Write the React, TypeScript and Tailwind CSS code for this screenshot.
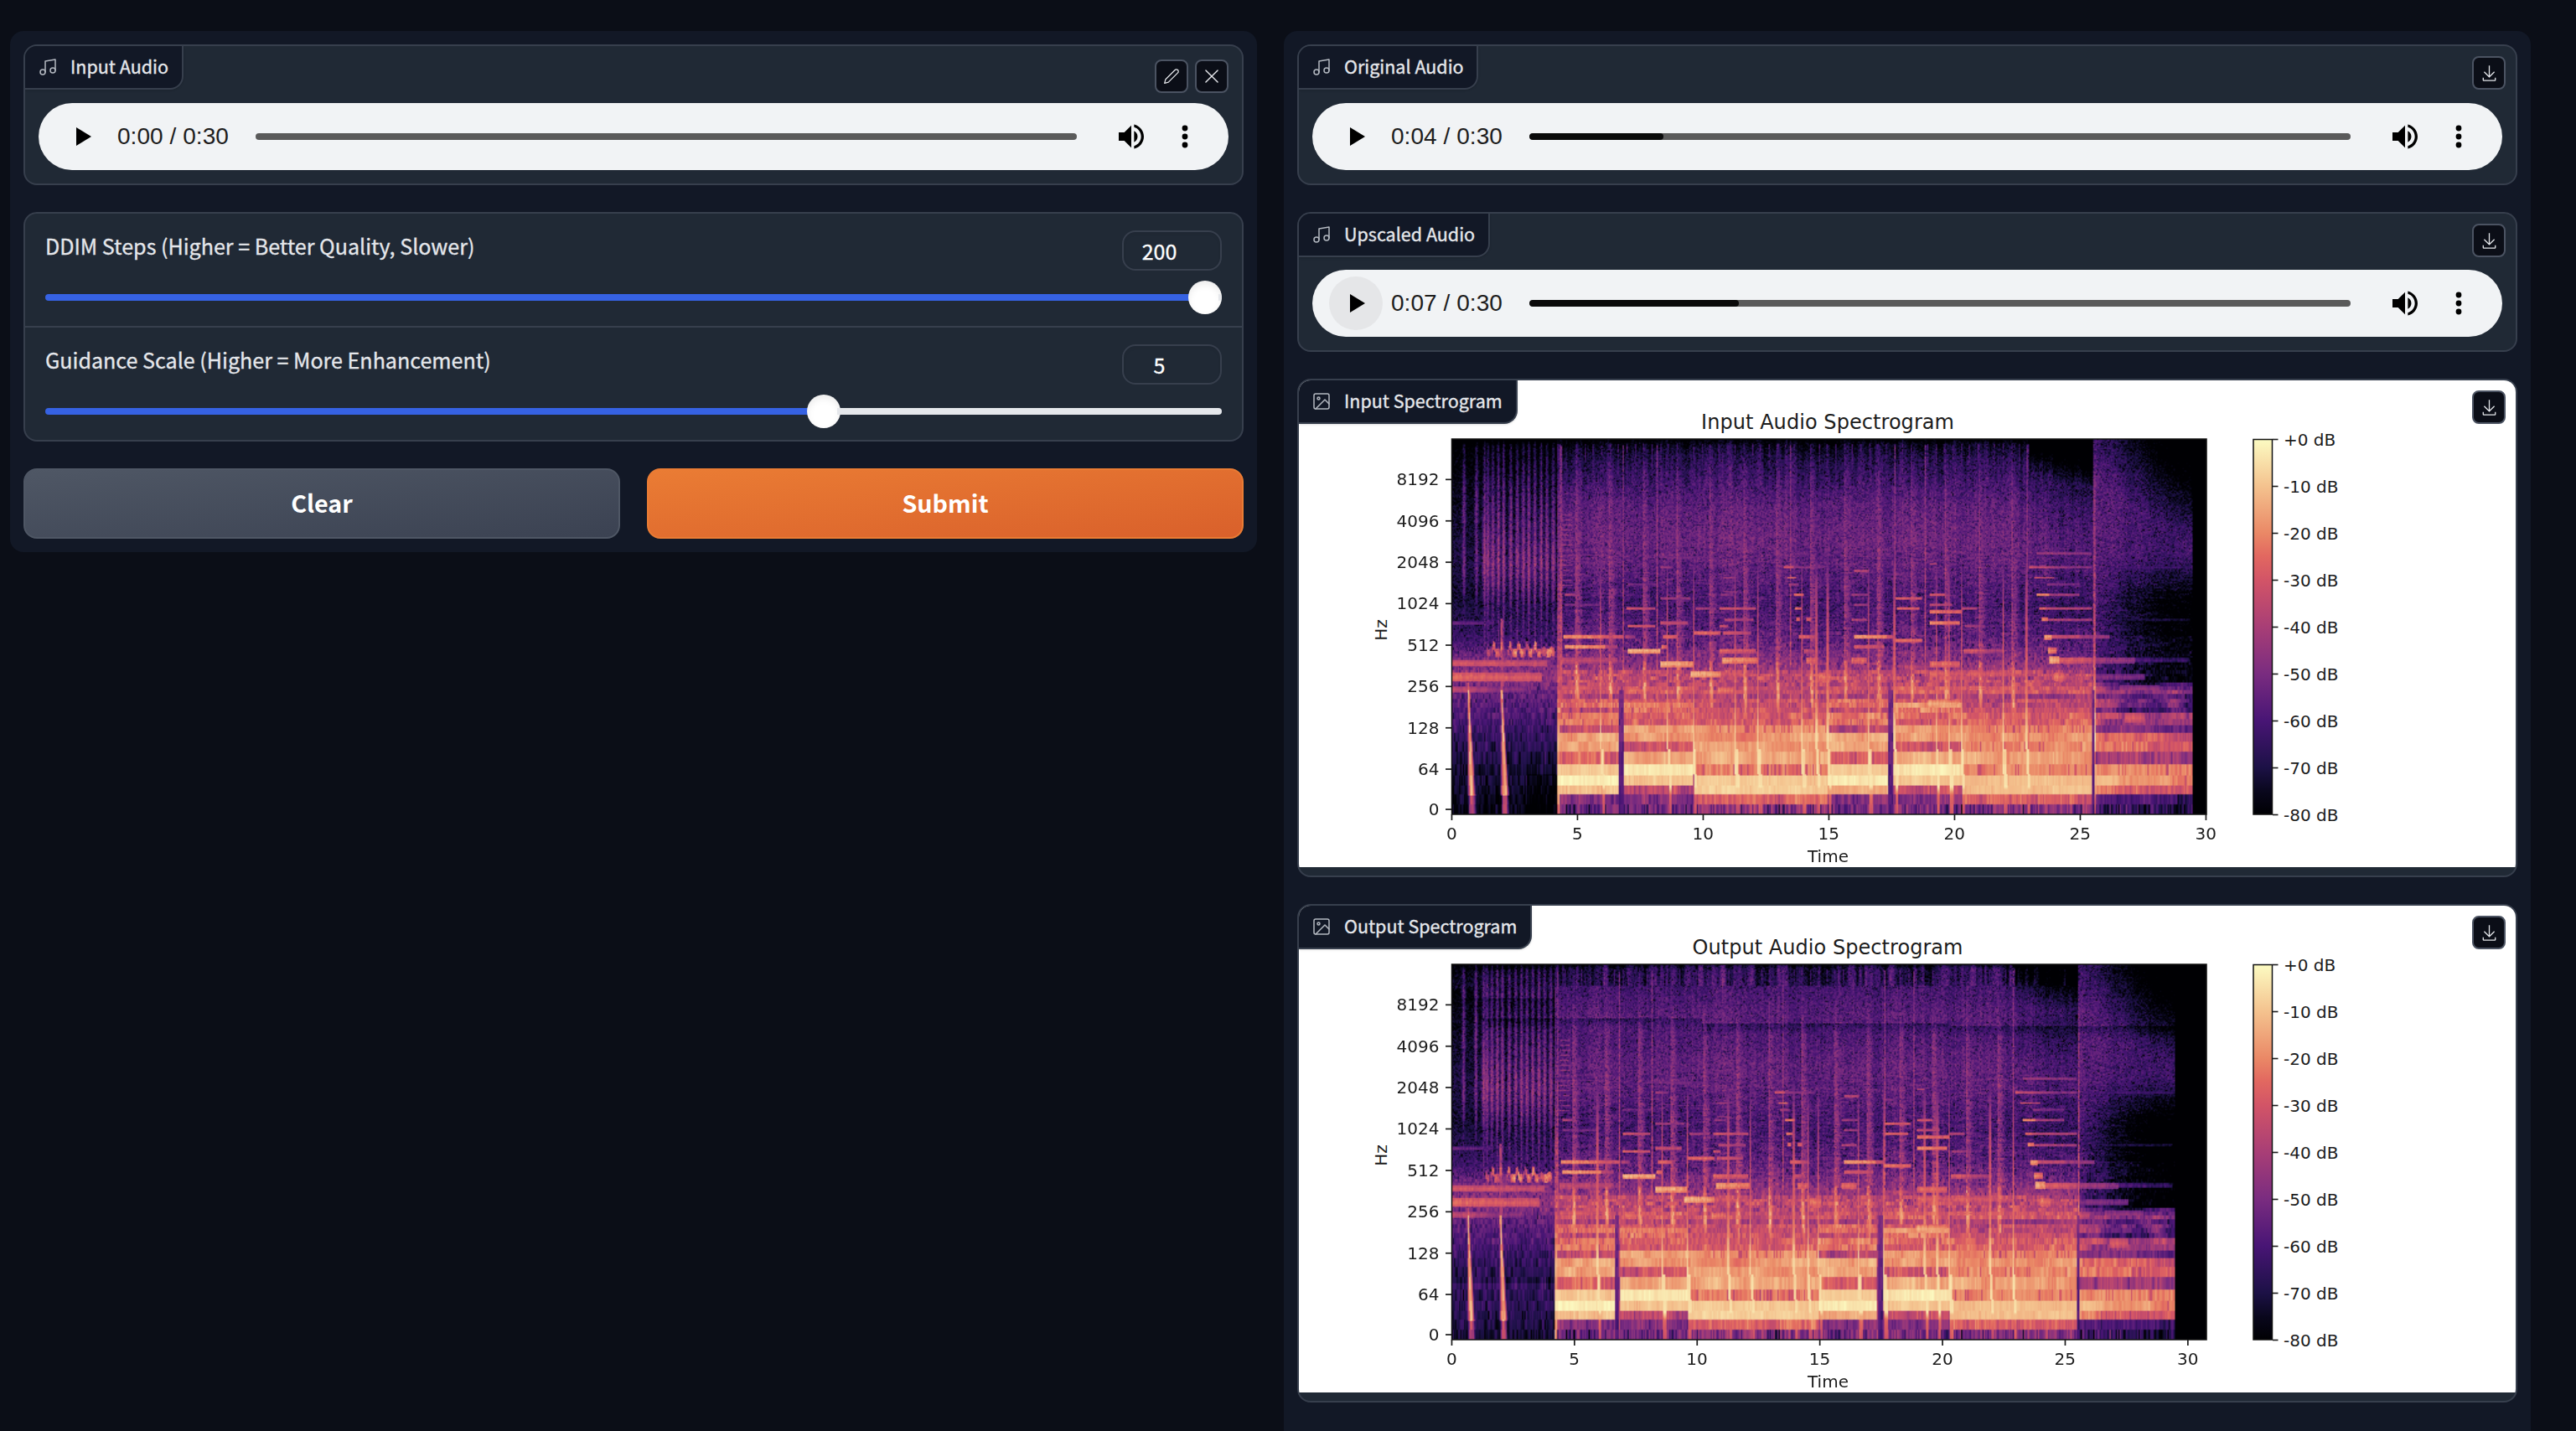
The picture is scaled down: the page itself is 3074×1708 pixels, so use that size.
import { useLayoutEffect, useRef, type ReactNode } from "react";

/* ---------- spectrogram model ---------- */

type Stop = [number, number, number, number];

// Magma ramp: level 0..1, r, g, b
const MAGMA: Stop[] = [
  [0, 0, 0, 3],
  [0.06, 9, 7, 28],
  [0.125, 28, 17, 70],
  [0.25, 72, 21, 117],
  [0.375, 122, 44, 128],
  [0.5, 168, 62, 118],
  [0.625, 210, 84, 103],
  [0.69, 226, 104, 96],
  [0.75, 234, 136, 102],
  [0.875, 244, 194, 142],
  [1, 252, 251, 194],
];

function magma(v: number): [number, number, number] {
  const x = Math.min(1, Math.max(0, v));
  for (let i = 1; i < MAGMA.length; i++) {
    if (x <= MAGMA[i][0]) {
      const a = MAGMA[i - 1];
      const b = MAGMA[i];
      const k = (x - a[0]) / (b[0] - a[0]);
      return [a[1] + (b[1] - a[1]) * k, a[2] + (b[2] - a[2]) * k, a[3] + (b[3] - a[3]) * k];
    }
  }
  return [252, 251, 194];
}

function hash(a: number, b: number): number {
  let h = (Math.imul(a | 0, 374761393) + Math.imul(b | 0, 668265263)) | 0;
  h = Math.imul(h ^ (h >>> 13), 1274126177);
  h = Math.imul(h ^ (h >>> 16), 2246822519);
  return ((h ^ (h >>> 15)) >>> 0) / 4294967296;
}

function smoothNoise(x: number, seed: number): number {
  const i = Math.floor(x);
  const f = x - i;
  const s = f * f * (3 - 2 * f);
  return hash(i, seed) * (1 - s) + hash(i + 1, seed) * s - 0.5;
}

function curve(points: number[][], x: number): number {
  if (x <= points[0][0]) return points[0][1];
  for (let i = 1; i < points.length; i++) {
    if (x <= points[i][0]) {
      const [x0, y0] = points[i - 1];
      const [x1, y1] = points[i];
      return y0 + ((y1 - y0) * (x - x0)) / (x1 - x0);
    }
  }
  return points[points.length - 1][1];
}

const PROFILE = [[0, -84], [5, -78], [22, -69], [50, -62], [80, -56], [120, -53], [150, -55], [178, -59], [200, -61], [225, -57], [245, -54], [262, -48], [280, -42], [300, -38], [448, -38]];
const PROFILE_OUT = [[0, -74], [5, -65], [30, -61], [60, -57], [90, -59], [120, -55], [150, -56], [178, -60], [200, -61], [225, -57], [245, -54], [262, -48], [280, -42], [300, -38], [448, -38]];
const INTRO = [[0, -88], [15, -82], [60, -78], [110, -73], [150, -71], [185, -74], [215, -69], [240, -63], [262, -52], [285, -45], [300, -54], [330, -60], [360, -66], [400, -72], [448, -78]];

// Chord sections: start, end, level of each low FFT bin
const SECTIONS: { a: number; b: number; bins: number[] }[] = [
  { a: 4.22, b: 6.65, bins: [-52, -47, -13, -3, -9, -28, -14, -15, -35, -21, -21, -38, -27, -29, -40, -31, -33, -42] },
  { a: 6.85, b: 9.62, bins: [-52, -48, -35, -9, -3, -14, -31, -18, -17, -29, -29, -23, -21, -30, -38, -28, -30, -42] },
  { a: 9.65, b: 14.96, bins: [-48, -27, -8, -9, -22, -15, -18, -18, -20, -30, -30, -31, -34, -33, -40, -33, -35, -42] },
  { a: 14.98, b: 17.36, bins: [-52, -47, -14, -3, -8, -26, -15, -15, -38, -22, -22, -36, -24, -26, -40, -31, -32, -42] },
  { a: 17.58, b: 20.3, bins: [-52, -48, -33, -9, -4, -14, -31, -18, -17, -30, -27, -24, -18, -26, -38, -30, -28, -40] },
  { a: 20.32, b: 25.5, bins: [-48, -28, -11, -11, -20, -16, -20, -18, -19, -28, -28, -34, -36, -35, -42, -30, -31, -40] },
  { a: 25.58, b: 29.47, bins: [-62, -54, -24, -11, -18, -38, -23, -24, -46, -36, -34, -54, -47, -46, -56, -44, -47, -56] },
];

// Harmonic partials: row, start, end, level, half height
const PARTIALS: number[][] = [
  [268, 0, 3.8, -28, 3.6], [284.5, 0, 3.6, -24, 5.2], [299, 0, 1.4, -33, 4], [299, 1.4, 3, -42, 4], [220, 0, 1.7, -50, 2],
  [236, 4.45, 5.95, -18, 2.6], [236, 5.95, 6.8, -27, 2.6], [236, 6.9, 7.3, -38, 2.6], [248, 4.5, 6.1, -15, 2.4], [248, 6.1, 6.6, -33, 2.4],
  [264, 4.4, 6.6, -32, 4], [186, 4.5, 5.1, -35, 1.2], [198, 4.5, 5.9, -45, 1.2], [65, 4.5, 5, -50, 1], [120, 4.5, 5.6, -48, 1],
  [202.5, 6.95, 8.1, -28, 1.5], [223.5, 7, 8.1, -25, 1.7], [252.5, 7, 8.3, -11, 3], [268.5, 8.3, 9.6, -12, 3.6], [236, 8.4, 9, -24, 2.6],
  [248, 8.35, 8.6, -22, 2.4], [219.5, 8.3, 9.4, -30, 1.7], [190, 8.3, 9.5, -38, 1.2], [231.5, 9.65, 10.7, -24, 2], [231.5, 10.8, 11.9, -30, 2],
  [280.5, 9.5, 10.7, -12, 4], [280.5, 10.7, 12, -28, 4], [202.5, 9.7, 10.5, -36, 1.4], [202.5, 10.65, 12.1, -27, 1.4], [186, 10.7, 11.2, -40, 1.2],
  [182, 10.8, 11.4, -42, 1.2], [223.5, 10.65, 11, -28, 1.7], [215.5, 10.85, 12, -34, 1.5], [252.5, 10.65, 12.1, -25, 3], [264, 10.75, 12.15, -16, 3.8],
  [165.5, 10.8, 11.3, -38, 1], [153, 13.2, 13.6, -26, 1], [153, 13.6, 14.8, -42, 1], [165.5, 13.35, 13.7, -24, 1.2], [173.5, 13.4, 13.8, -36, 1],
  [186, 13.6, 14, -20, 1.5], [202.5, 13.65, 13.9, -20, 1.7], [215.5, 13.7, 13.85, -22, 2.4], [215.5, 14.1, 14.3, -25, 2], [236, 13.8, 14.2, -24, 2.6],
  [236, 14.2, 14.5, -32, 2.6], [252.5, 14, 14.4, -30, 3], [264, 14.1, 14.5, -22, 4], [284, 14.6, 15.1, -21, 5], [141, 8.3, 10.5, -46, 1],
  [153, 8.3, 8.8, -38, 1], [173.5, 7, 8.2, -45, 1], [300, 7.1, 8.4, -24, 4], [316, 6.9, 9.6, -22, 4], [297, 4.4, 6.5, -27, 4],
  [300, 10.6, 11.2, -21, 4], [157.5, 16, 16.6, -31, 1], [186, 15.9, 16.6, -38, 1.2], [198, 16, 16.6, -38, 1.2], [215.5, 15.9, 16.5, -33, 1.8],
  [236, 16, 17.3, -16, 2.8], [236, 17.3, 17.6, -28, 2.6], [248, 16, 17.2, -28, 2.4], [264, 15.9, 16.5, -23, 4], [190, 17.65, 18.7, -25, 1.5],
  [202.5, 17.7, 18.6, -23, 1.7], [240, 17.65, 18.7, -21, 2.4], [161.5, 17.6, 18.1, -42, 1], [149, 19, 19.3, -31, 1], [186, 19, 19.6, -27, 1.5],
  [198, 19, 19.9, -32, 1.4], [206.5, 19, 20.3, -22, 2], [219.5, 19, 20.2, -19, 2.2], [268.5, 19, 20.2, -23, 3.8], [272, 18, 19, -34, 3],
  [316, 18.9, 20.2, -12, 4], [324, 17.8, 20.2, -22, 3], [202.5, 20.3, 20.9, -33, 1.4], [223.5, 20.4, 21.2, -38, 1.6], [252.5, 20.35, 21.2, -28, 3],
  [252.5, 21.2, 21.9, -37, 3], [280.5, 19, 20.5, -26, 4], [280.5, 20.5, 22.9, -27, 4], [136.5, 23.3, 25.5, -39, 1], [153, 23, 24, -31, 1],
  [153, 24, 25.5, -41, 1], [153, 25.6, 29.4, -55, 1], [165.5, 23.2, 24, -29, 1.2], [173.5, 23.7, 25, -44, 1], [186, 23.3, 23.8, -16, 1.5],
  [186, 23.8, 25, -36, 1.2], [202.5, 23.4, 23.7, -22, 1.8], [202.5, 23.7, 25.5, -32, 1.3], [215.5, 23.5, 23.75, -18, 2.5], [215.5, 23.75, 25.5, -35, 1.6],
  [215.5, 26, 29.4, -64, 1], [236, 23.6, 23.9, -15, 3], [236, 23.9, 25, -30, 2.5], [236, 25, 26.2, -40, 2.4], [252.5, 23.75, 24.1, -20, 3.5],
  [264, 23.8, 24.2, -12, 4.4], [264, 24.2, 25.5, -26, 3.8], [264, 25.5, 27.2, -40, 3.6], [264, 27.2, 29.4, -58, 3], [284, 24, 24.4, -20, 5],
  [284, 24.4, 25.5, -32, 5], [284, 25.6, 27.6, -46, 4], [297, 20.4, 25.5, -29, 4], [300, 25.6, 26, -30, 4], [299, 26.6, 28.2, -42, 5], [333, 26.8, 27.6, -26, 6],
];

const KICKS = [5.95, 8.6, 9.62, 11.28, 12.2, 13.95, 14.52, 14.97, 16.6, 17.62, 19.28, 19.8, 20.28, 21.95, 22.88];
const SNARES = [4.97, 6.3, 7.65, 8.98, 10.3, 11.65, 12.95, 14.3, 15.65, 16.98, 18.3, 19.65, 21, 22.3];
const HATS = [8.2, 13.5, 17.65, 18.85, 22.9, 4.35, 6.85];
const GAPS = [[6.66, 6.84], [17.38, 17.57], [25.49, 25.57]];
const CLICKS = [0.5, 1.0, 1.32, 1.45, 1.65, 1.87, 2.08, 2.36, 2.62, 2.86, 3.08, 3.32, 3.57, 3.8, 4.05];

const BIN_HZ = 15.625;

function level(t: number, y: number, col: number, row: number, output: boolean): number {
  if (t > 29.47) return -82;
  const hz = y > 394.3 ? (64 * (442.3 - y)) / 48 : 64 * Math.pow(2, (394.3 - y) / 49.33);
  const bin = Math.max(0, Math.round(hz / BIN_HZ));
  const u = Math.max(0.0005, hash(col, bin < 160 ? bin * 7 + 3 : row * 977 + 11));
  const speckle = Math.max(-17, 4.2 * Math.log(-Math.log(1 - u * 0.999)) + 2.2);
  const streak = smoothNoise(t * 14, bin + 31) * 8 + smoothNoise(t * 45, bin + 811) * 6;

  let db: number;
  let noise: number;

  if (t < 4.22) {
    db = curve(INTRO, y);
    if (output) db += y < 30 ? 6 : y > 380 ? 6 : 0;
    noise = speckle * 0.9;
    if (y > 255) noise = speckle * 0.6 + streak * 1.1;
    if (t > 3 && y > 400 && !output) db -= 5;
    for (const c of CLICKS) {
      const d = Math.abs(t - c);
      if (d < 0.12 && y < 300) {
        const strong = curve([[0, -84], [8, -66], [60, -53], [110, -45], [150, -39], [172, -44], [200, -53], [240, -54], [262, -44], [300, -44]], y) + (output && y < 40 ? 8 : 0);
        const weak = c < 1.2 && y > 100 ? 7 : 0;
        db = Math.max(db, strong - weak - d * 230);
      }
    }
    if (t > 1.4 && t < 4.12 && y > 240 && y < 266) {
      const centre = 255 - 9 * Math.max(0, Math.sin(t * 19 + 1)) * (t < 3.5 ? 1 : 0.2);
      const d = Math.abs(y - centre);
      if (d < 5.5) db = Math.max(db, -28 + smoothNoise(t * 12, 5) * 28 - d * 1.4 - (t < 2.4 ? 7 : 0));
    }
    for (const [c, top] of [[0.68, 290], [2.0, 215]]) {
      if (y > top) {
        const centre = c + Math.max(0, (y - 300) / 148) * 0.15;
        const w = 0.03 + Math.max(0, (y - 330) / 118) * 0.06;
        const d = Math.abs(t - centre) / w;
        if (d < 2.2) db = Math.max(db, (y > 425 ? -32 : y > 300 ? -11 : -30) - d * d * 12);
      }
    }
  } else {
    db = curve(output ? PROFILE_OUT : PROFILE, y) + smoothNoise(t * 2.2, 99) * 5 + smoothNoise(t * 18, 17) * 5;
    noise = y > 255 ? speckle * 0.7 + streak * 1.2 : speckle * 0.92 + (y > 130 ? smoothNoise(t * 3, bin) * 8 : 0);
    if (y < 55 && !output) db += smoothNoise(t * 9, 4) * 9;
    if (output && y < 26) db += smoothNoise(t * 9, 4) * 22 - 3;

    if (t > 23 && t < 25.55) {
      const k = (t - 23) / 2.5;
      if (y < 150) db -= (3 + 7 * k) * (1 - y / 150) + Math.min(1, Math.max(0, (42 + 26 * k - y) / 36)) * 12;
      if (y > 60 && y < 260) db -= 5 * k;
    }
    if (t >= 25.55) {
      const k = (t - 25.55) / 3.9;
      if (y < 290) {
        const edge = 3 + 70 * k;
        db = -55 - 7 * k - 3 * Math.sin(Math.PI * k) + smoothNoise(t * 3, 98) * 3;
        db -= Math.min(1.6, Math.max(0, (edge + 50 - y) / 55)) * (8 + 9 * k);
        if (y > 140) db -= Math.min(1, (y - 140) / 55) * (1 + 22 * Math.pow(k, 0.6)) * (y > 235 ? 0.75 : 1);
        if (output && y > 130) db -= 7 * k * Math.min(1, (y - 130) / 40);
        noise = speckle + (y > 170 ? smoothNoise(t * 4, bin) * 8 : 0);
      } else {
        db = -48 - 16 * k;
      }
    }

    for (const s of SECTIONS) {
      if (t >= s.a && t <= s.b && bin < s.bins.length) {
        db = s.bins[bin];
        if (s.a > 25) {
          const k = (t - s.a) / 3.9;
          db -= bin < 4 ? 8 * k : bin < 8 ? 7 * k : 9 * k;
          if (bin > 8) db += smoothNoise(t * 1.6, bin >> 1) * 20;
        }
        const gain = db > -13 ? 0.35 : db > -22 ? 0.7 : 1.15;
        noise = streak * gain * 0.9 + smoothNoise(t * 2.5, bin + 400) * (db > -13 ? 3 : 9) + speckle * (bin === 0 ? 1.4 : db > -24 ? 0.15 : 0.5);
        if (db > -24 && db < -18 && hash(Math.floor(t * 22), bin * 5) > 0.88) db -= 11;
      }
    }
    if (bin >= 17 && bin < 22 && t < 25.5) db = Math.max(db, -36 + smoothNoise(t * 4, bin) * 14);
  }

  for (const p of PARTIALS) {
    if (t >= p[1] && t <= p[2]) {
      const d = Math.abs(y - p[0]);
      const reach = Math.max(p[4], 1.3);
      if (d < reach) {
        const v = p[3] - (d / reach) * 7 - ((t - p[1]) / (p[2] - p[1])) * 5;
        if (v > db) {
          db = v;
          noise = noise * 0.35 + smoothNoise(t * 20, p[0]) * 6;
        }
      }
    }
  }

  if (t > 4.4 && t < 4.8 && y > 85 && y < 175 && row % 4 === 0) db = Math.max(db, -46);
  if (t > 4.22) {
    for (const c of KICKS) {
      const sweep = y > 370 ? 0.05 + (y > 400 ? 0.05 : 0) : 0;
      const d = Math.abs(t - c - sweep);
      const w = y > 370 ? 0.065 : 0.03;
      if (d < w && y > 140) {
        db = Math.max(db, curve([[140, -56], [200, -38], [270, -28], [320, -20], [350, -8], [415, -4], [425, -25], [448, -32]], y));
        noise *= 0.4;
      }
    }
    for (const c of SNARES) {
      const d = t - c;
      if (d > -0.04 && d < 0.26 && y < 265) {
        const v = curve([[0, -84], [8, -66], [40, -55], [80, -47], [150, -43], [220, -42], [265, -34]], y);
        db = Math.max(db, v - Math.abs(d) * (d < 0.06 ? 120 : 60));
      } else if (d > -0.04 && d < 0.13 && y < 335 && y >= 265) {
        db = Math.max(db, -14 - Math.abs(300 - y) * 0.35 - Math.abs(d - (y - 265) * 0.001) * 120);
      }
    }
    for (const c of HATS) {
      if (Math.abs(t - c) < 0.03 && y < 330) db = Math.max(db, y < 8 ? -78 : -53 + y * 0.07);
    }
    if (t < 23) {
      const ph = ((t - 4.3) / 0.3325) % 1;
      if (ph < 0.14 && y > 6 && y < 50) db = Math.max(db, -63);
    }
    if (Math.abs(t - 25.58) < 0.03) db = Math.max(db, curve([[4, -70], [60, -48], [250, -34], [310, -18], [360, -8], [420, -20], [448, -40]], y));
    if (Math.abs(t - 4.26) < 0.045 && y > 150) db = Math.max(db, curve([[150, -52], [300, -30], [360, -10], [448, -24]], y));
    for (const g of GAPS) {
      if (t > g[0] && t < g[1] && y > 300) {
        db = -50 - ((y - 300) / 148) * 9;
        noise = speckle * 0.5;
      }
    }
  }

  if (output && t > 1.3) {
    const seam = t < 10.2 ? 64 : t < 20.3 ? 71 : 74;
    if (y > seam && y < seam + 14) db -= 8 * (1 - (y - seam) / 14);
    else if (y <= seam && y > seam - 2) db += 2;
  }
  return db + noise;
}

const COLS = 600;
const ROWS = 299;

function Heatmap({ seconds, output }: { seconds: number; output: boolean }) {
  const ref = useRef<HTMLCanvasElement>(null);
  useLayoutEffect(() => {
    const ctx = ref.current?.getContext("2d");
    if (!ctx) return;
    const img = ctx.createImageData(COLS, ROWS);
    for (let r = 0; r < ROWS; r++) {
      const y = ((r + 0.5) * 448) / ROWS;
      for (let c = 0; c < COLS; c++) {
        const t = ((c + 0.5) / COLS) * seconds;
        const [red, green, blue] = magma((level(t, y, c, r, output) + 80) / 80);
        const o = (r * COLS + c) * 4;
        img.data[o] = red;
        img.data[o + 1] = green;
        img.data[o + 2] = blue;
        img.data[o + 3] = 255;
      }
    }
    ctx.putImageData(img, 0, 0);
  }, [seconds, output]);
  return <canvas ref={ref} width={COLS} height={ROWS} className="block h-[448px] w-[901px]" />;
}

/* ---------- chart ---------- */

const HZ_TICKS: [string, number][] = [
  ["8192", 118.3], ["4096", 167.7], ["2048", 217], ["1024", 266.4], ["512", 316], ["256", 365.3], ["128", 414.7], ["64", 464], ["0", 512],
];
const DB_TICKS = ["+0 dB", "-10 dB", "-20 dB", "-30 dB", "-40 dB", "-50 dB", "-60 dB", "-70 dB", "-80 dB"];

function Spectrogram({ title, step, output }: { title: string; step: number; output: boolean }) {
  const gradient = output ? "scale-output" : "scale-input";
  return (
    <svg viewBox="0 0 1452 581" className="block h-[581px] w-full bg-white font-['DejaVu_Sans',sans-serif]" fill="#1c1c1c">
      <defs>
        <linearGradient id={gradient} x1="0" y1="1" x2="0" y2="0">
          {MAGMA.map(([o, r, g, b]) => (
            <stop key={o} offset={o} stopColor={`rgb(${r},${g},${b})`} />
          ))}
        </linearGradient>
      </defs>
      <text x="631" y="57.500" fontSize="24" textAnchor="middle" textLength={output ? 323 : 302}>{title}</text>
      <foreignObject x="182" y="70" width="901" height="448">
        <Heatmap seconds={901 / (step / 5)} output={output} />
      </foreignObject>
      <rect x="182.5" y="70" width="900.5" height="448" fill="none" stroke="#111" strokeWidth="1.5" />
      {HZ_TICKS.map(([label, y]) => (
        <g key={label}>
          <rect x="175" y={y - 0.8} width="7" height="1.7" />
          <text x="167.500" y={y + 7} fontSize="20" textAnchor="end">{label}</text>
        </g>
      ))}
      {[0, 5, 10, 15, 20, 25, 30].map((n, i) => (
        <g key={n}>
          <rect x={181.6 + i * step} y="518" width="1.7" height="7" />
          <text x={182.3 + i * step} y="547.500" fontSize="20" textAnchor="middle">{n}</text>
        </g>
      ))}
      <text x="631.500" y="574.500" fontSize="20" textAnchor="middle">Time</text>
      <text transform="translate(104.500 298) rotate(-90)" fontSize="20" textAnchor="middle">Hz</text>
      <rect x="1139" y="70.500" width="22.500" height="447.500" fill={`url(#${gradient})`} stroke="#111" strokeWidth="1.5" />
      {DB_TICKS.map((label, i) => (
        <g key={label}>
          <rect x="1162" y={69.7 + i * 56} width="6.500" height="1.600" />
          <text x="1175" y={77.7 + i * 56} fontSize="20">{label}</text>
        </g>
      ))}
    </svg>
  );
}

/* ---------- icons ---------- */

function MusicIcon() {
  return (
    <svg viewBox="0 0 24 24" className="size-6 shrink-0" fill="none" stroke="#b4b9c1" strokeWidth="1.5" strokeLinecap="round" strokeLinejoin="round">
      <path d="M9 18V5l12-2v13" />
      <circle cx="6" cy="18" r="3" />
      <circle cx="18" cy="16" r="3" />
    </svg>
  );
}

function ImageIcon() {
  return (
    <svg viewBox="0 0 24 24" className="size-6 shrink-0" fill="none" stroke="#b4b9c1" strokeWidth="1.5" strokeLinecap="round" strokeLinejoin="round">
      <rect x="3" y="3" width="18" height="18" rx="2" />
      <circle cx="8.500" cy="8.500" r="1.500" />
      <path d="M21 15l-5-5L5 21" />
    </svg>
  );
}

function PencilIcon() {
  return (
    <svg viewBox="0 0 24 24" className="size-5" fill="none" stroke="#e5e7eb" strokeWidth="1.5" strokeLinecap="round" strokeLinejoin="round">
      <path d="M17 3a2.828 2.828 0 1 1 4 4L7.500 20.500 2 22l1.500-5.500L17 3z" />
    </svg>
  );
}

function CloseIcon() {
  return (
    <svg viewBox="0 0 24 24" className="size-5" fill="none" stroke="#e5e7eb" strokeWidth="1.700" strokeLinecap="round">
      <path d="M3.500 3.500l17 17M20.500 3.500l-17 17" />
    </svg>
  );
}

function DownloadIcon() {
  return (
    <svg viewBox="0 0 32 32" className="size-[21px]" fill="#e5e7eb">
      <path d="M26 24v4H6v-4H4v4a2 2 0 0 0 2 2h20a2 2 0 0 0 2-2v-4zm0-10l-1.410-1.410L17 20.170V2h-2v18.170l-7.590-7.580L6 14l10 10l10-10z" />
    </svg>
  );
}

/* ---------- building blocks ---------- */

function IconButton({ children }: { children: ReactNode }) {
  return (
    <button className="flex size-10 items-center justify-center rounded-lg border-2 border-[#4b5362] bg-[#0b0e17]">
      {children}
    </button>
  );
}

function BlockLabel({ icon, width, children }: { icon: ReactNode; width: string; children: ReactNode }) {
  return (
    <div className={`absolute top-0 left-0 flex h-[52px] items-center gap-[15px] rounded-br-2xl border-r-2 border-b-2 border-[#373f4d] bg-[#121826] pl-[15px] text-[21.500px] leading-none whitespace-nowrap text-[#e5e7eb] shadow-sm ${width}`}>
      {icon}
      <span className="pb-0.5 [-webkit-text-stroke:0.35px_#e5e7eb]">{children}</span>
    </div>
  );
}

function Player({ time, played, hover }: { time: string; played?: string; hover?: boolean }) {
  return (
    <div className="flex h-20 items-center rounded-full bg-[#f1f3f5] pl-5 font-['Liberation_Sans',Arial,sans-serif] text-black">
      <div className={`flex size-16 shrink-0 items-center rounded-full pl-[25px] ${hover ? "bg-[#e5e6e8]" : ""}`}>
        <svg viewBox="0 0 18 22" className="h-[22px] w-[18px]">
          <path d="M0 0l18 11L0 22z" />
        </svg>
      </div>
      <span className="ml-2.5 w-[165px] shrink-0 text-[28px] leading-none tracking-[0.05px] whitespace-nowrap text-[#1d1d1d]">{time}</span>
      <div className="h-2 w-[980px] shrink-0 overflow-hidden rounded-full bg-[#5a5a5a]">
        {played && <div className={`h-2 rounded-full bg-[#0a0a0a] ${played}`} />}
      </div>
      <svg viewBox="0 0 24 24" className="ml-[45px] size-10 shrink-0">
        <path d="M3 9v6h4l5 5V4L7 9H3zm13.500 3c0-1.770-1.020-3.290-2.500-4.030v8.050c1.480-.730 2.500-2.250 2.500-4.020zM14 3.230v2.060c2.890.860 5 3.540 5 6.710s-2.110 5.850-5 6.710v2.060c4.010-.910 7-4.490 7-8.770s-2.990-7.860-7-8.770z" />
      </svg>
      <svg viewBox="0 0 8 28" className="ml-10 h-7 w-2 shrink-0">
        <circle cx="4" cy="4" r="3.400" />
        <circle cx="4" cy="14" r="3.400" />
        <circle cx="4" cy="24" r="3.400" />
      </svg>
    </div>
  );
}

function Card({ className, children }: { className: string; children: ReactNode }) {
  return (
    <section className={`relative overflow-hidden rounded-2xl border-2 border-[#373f4d] bg-[#202935] ${className}`}>
      {children}
    </section>
  );
}

function SliderRow({ label, value, fill }: { label: string; value: string; fill: string }) {
  return (
    <div className="h-[134px] pt-5 pr-6 pl-6">
      <div className="flex h-12 items-start justify-between">
        <label className="pt-1 text-[25.080px] leading-7 text-[#e5e7eb] [-webkit-text-stroke:0.3px_#e5e7eb]">{label}</label>
        <div className="flex h-12 w-[119px] items-center justify-center rounded-2xl border-2 border-[#373f4d] pr-[30px] text-[25px] leading-none text-white shadow-inner [-webkit-text-stroke:0.3px_white]">
          {value}
        </div>
      </div>
      <div className="mt-3 flex h-10 items-center">
        <div className={`h-2 rounded-l-full bg-[#3662e3] ${fill}`} />
        <div className="-mx-1 size-10 shrink-0 rounded-full bg-white shadow-[inset_0_4px_8px_rgba(0,0,0,0.08)]" />
        <div className="h-2 flex-1 rounded-r-full bg-[#e5e7eb]" />
      </div>
    </div>
  );
}

export default function App() {
  return (
    <main className="flex h-[1708px] w-[3074px] items-start gap-8 overflow-hidden bg-[#0b0e17] pt-[37px] pl-3 font-['Noto_Sans_CJK_SC','Noto_Sans',sans-serif]">
      <div className="flex h-[622px] w-[1488px] shrink-0 flex-col gap-8 rounded-2xl bg-[#121826] p-4">
        <Card className="h-[168px] px-4 pt-[68px]">
          <BlockLabel icon={<MusicIcon />} width="w-[189px]">Input Audio</BlockLabel>
          <div className="absolute top-4 right-4 flex gap-2">
            <IconButton><PencilIcon /></IconButton>
            <IconButton><CloseIcon /></IconButton>
          </div>
          <Player time="0:00 / 0:30" />
        </Card>

        <Card className="h-[274px]">
          <SliderRow label="DDIM Steps (Higher = Better Quality, Slower)" value="200" fill="w-[1368px]" />
          <div className="h-0.5 bg-[#373f4d]" />
          <SliderRow label="Guidance Scale (Higher = More Enhancement)" value="5" fill="w-[913px]" />
        </Card>

        <div className="grid h-[84px] grid-cols-2 gap-8 text-[28.700px] font-bold text-white">
          <button className="rounded-2xl border-2 border-[#4f5765] bg-linear-to-br from-[#4f5765] to-[#3b4252] pb-0.5">Clear</button>
          <button className="rounded-2xl border-2 border-[#ea7c34] bg-linear-to-br from-[#ea7c34] to-[#d9602b] pb-0.5">Submit</button>
        </div>
      </div>

      <div className="flex h-[1700px] w-[1488px] shrink-0 flex-col gap-8 rounded-2xl bg-[#121826] p-4">
        <Card className="h-[168px] shrink-0 px-4 pt-[68px]">
          <BlockLabel icon={<MusicIcon />} width="w-[214px]">Original Audio</BlockLabel>
          <div className="absolute top-3 right-3">
            <IconButton><DownloadIcon /></IconButton>
          </div>
          <Player time="0:04 / 0:30" played="w-[160px]" />
        </Card>

        <Card className="h-[167px] shrink-0 px-4 pt-[67px]">
          <BlockLabel icon={<MusicIcon />} width="w-[228px]">Upscaled Audio</BlockLabel>
          <div className="absolute top-3 right-3">
            <IconButton><DownloadIcon /></IconButton>
          </div>
          <Player time="0:07 / 0:30" played="w-[250px]" hover />
        </Card>

        <Card className="h-[595px] shrink-0">
          <Spectrogram title="Input Audio Spectrogram" step={150} output={false} />
          <BlockLabel icon={<ImageIcon />} width="w-[261px]">Input Spectrogram</BlockLabel>
          <div className="absolute top-3 right-3">
            <IconButton><DownloadIcon /></IconButton>
          </div>
        </Card>

        <Card className="h-[595px] shrink-0">
          <Spectrogram title="Output Audio Spectrogram" step={146.4} output />
          <BlockLabel icon={<ImageIcon />} width="w-[278px]">Output Spectrogram</BlockLabel>
          <div className="absolute top-3 right-3">
            <IconButton><DownloadIcon /></IconButton>
          </div>
        </Card>
      </div>
    </main>
  );
}
